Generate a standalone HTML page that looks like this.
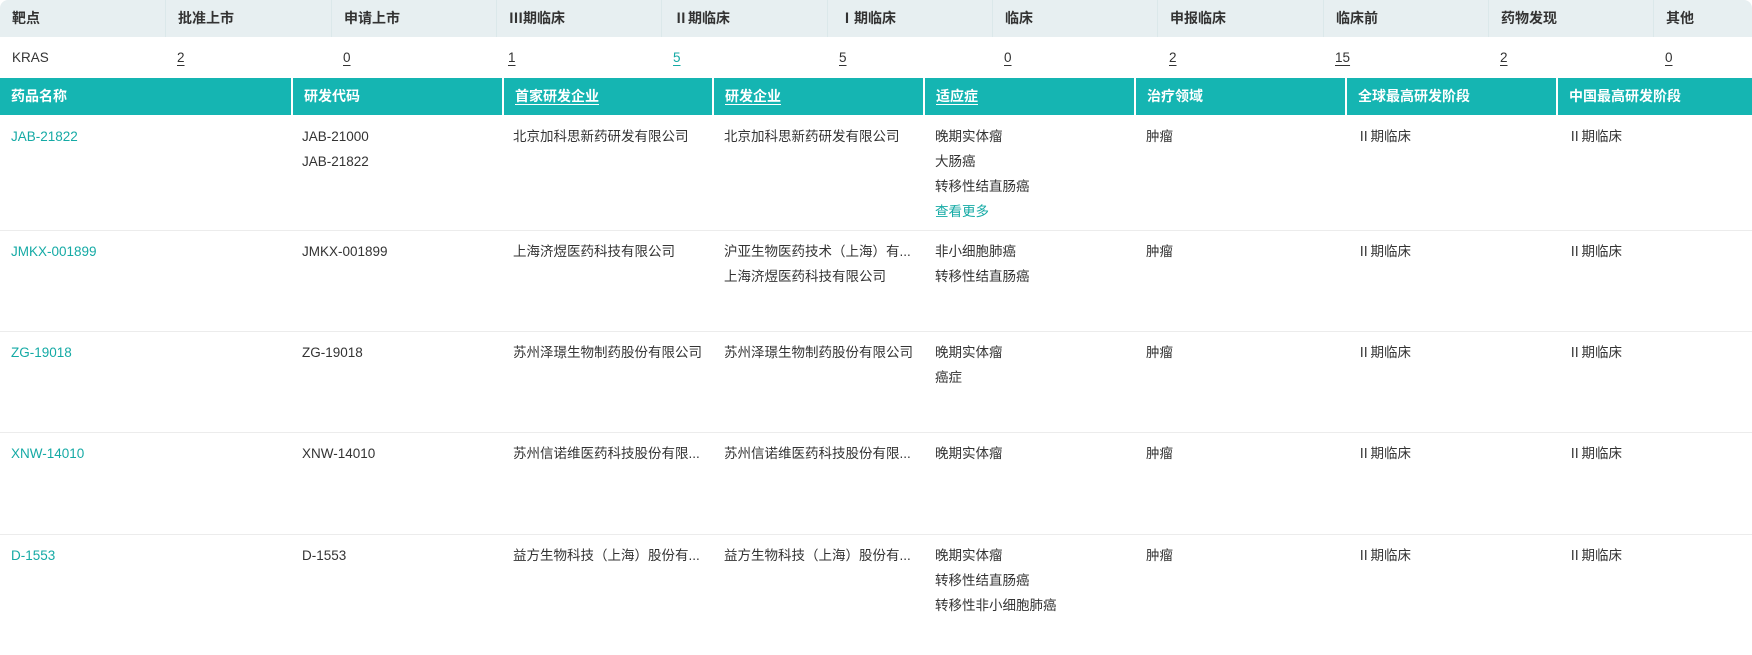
<!DOCTYPE html>
<html><head><meta charset="utf-8"><style>
*{margin:0;padding:0;box-sizing:border-box}
body{width:1752px;height:627px;overflow:hidden;background:#fff;font-family:"Liberation Sans","Noto Sans CJK SC",sans-serif;font-size:13.5px;color:#333}
.a{position:absolute;white-space:nowrap}
.th{position:absolute;top:0;height:37px;line-height:37px;background:#e7eff1;font-weight:bold;color:#333;padding-left:12px;border-left:1px solid #dbe8ea;font-size:14px}
.td{position:absolute;top:37px;height:41px;line-height:41px;padding-left:12px}
.td span{text-decoration:underline;text-underline-offset:3px}
.h{position:absolute;top:78px;height:37px;line-height:37px;background:#15b5b2;color:#fff;font-weight:bold;padding-left:11px;border-left:2px solid #fff;font-size:14px}
.u{text-decoration:underline;text-underline-offset:3px}
.row{position:absolute;left:0;width:1752px;border-bottom:1px solid #ececec}
.c{position:absolute;line-height:25px;white-space:nowrap}
.lk{color:#15aaa5}
</style></head><body>
<div class="th" style="left:0;width:165px;border-left:none;border-top-left-radius:8px">靶点</div>
<div class="th" style="left:165px;width:166px">批准上市</div>
<div class="th" style="left:331px;width:165px">申请上市</div>
<div class="th" style="left:496px;width:165px">Ⅲ期临床</div>
<div class="th" style="left:661px;width:166px">Ⅱ期临床</div>
<div class="th" style="left:827px;width:165px">Ⅰ期临床</div>
<div class="th" style="left:992px;width:165px">临床</div>
<div class="th" style="left:1157px;width:166px">申报临床</div>
<div class="th" style="left:1323px;width:165px">临床前</div>
<div class="th" style="left:1488px;width:165px">药物发现</div>
<div class="th" style="left:1653px;width:99px;border-top-right-radius:8px">其他</div>

<div class="td" style="left:0">KRAS</div>
<div class="td" style="left:165px"><span>2</span></div>
<div class="td" style="left:331px"><span>0</span></div>
<div class="td" style="left:496px"><span>1</span></div>
<div class="td" style="left:661px"><span class="lk">5</span></div>
<div class="td" style="left:827px"><span>5</span></div>
<div class="td" style="left:992px"><span>0</span></div>
<div class="td" style="left:1157px"><span>2</span></div>
<div class="td" style="left:1323px"><span>15</span></div>
<div class="td" style="left:1488px"><span>2</span></div>
<div class="td" style="left:1653px"><span>0</span></div>

<div class="h" style="left:0;width:291px;border-left:none">药品名称</div>
<div class="h" style="left:291px;width:211px">研发代码</div>
<div class="h" style="left:502px;width:210px"><span class="u">首家研发企业</span></div>
<div class="h" style="left:712px;width:211px"><span class="u">研发企业</span></div>
<div class="h" style="left:923px;width:211px"><span class="u">适应症</span></div>
<div class="h" style="left:1134px;width:211px">治疗领域</div>
<div class="h" style="left:1345px;width:211px">全球最高研发阶段</div>
<div class="h" style="left:1556px;width:196px">中国最高研发阶段</div>

<div class="row" style="top:115px;height:116px">
<div class="c lk" style="left:11px;top:9px">JAB-21822</div>
<div class="c" style="left:302px;top:9px">JAB-21000<br>JAB-21822</div>
<div class="c" style="left:513px;top:9px">北京加科思新药研发有限公司</div>
<div class="c" style="left:724px;top:9px">北京加科思新药研发有限公司</div>
<div class="c" style="left:935px;top:9px">晚期实体瘤<br>大肠癌<br>转移性结直肠癌<br><span class="lk">查看更多</span></div>
<div class="c" style="left:1146px;top:9px">肿瘤</div>
<div class="c" style="left:1357px;top:9px">Ⅱ期临床</div>
<div class="c" style="left:1568px;top:9px">Ⅱ期临床</div>
</div>
<div class="row" style="top:231px;height:101px">
<div class="c lk" style="left:11px;top:8px">JMKX-001899</div>
<div class="c" style="left:302px;top:8px">JMKX-001899</div>
<div class="c" style="left:513px;top:8px">上海济煜医药科技有限公司</div>
<div class="c" style="left:724px;top:8px">沪亚生物医药技术（上海）有...<br>上海济煜医药科技有限公司</div>
<div class="c" style="left:935px;top:8px">非小细胞肺癌<br>转移性结直肠癌</div>
<div class="c" style="left:1146px;top:8px">肿瘤</div>
<div class="c" style="left:1357px;top:8px">Ⅱ期临床</div>
<div class="c" style="left:1568px;top:8px">Ⅱ期临床</div>
</div>
<div class="row" style="top:332px;height:101px">
<div class="c lk" style="left:11px;top:8px">ZG-19018</div>
<div class="c" style="left:302px;top:8px">ZG-19018</div>
<div class="c" style="left:513px;top:8px">苏州泽璟生物制药股份有限公司</div>
<div class="c" style="left:724px;top:8px">苏州泽璟生物制药股份有限公司</div>
<div class="c" style="left:935px;top:8px">晚期实体瘤<br>癌症</div>
<div class="c" style="left:1146px;top:8px">肿瘤</div>
<div class="c" style="left:1357px;top:8px">Ⅱ期临床</div>
<div class="c" style="left:1568px;top:8px">Ⅱ期临床</div>
</div>
<div class="row" style="top:433px;height:102px">
<div class="c lk" style="left:11px;top:8px">XNW-14010</div>
<div class="c" style="left:302px;top:8px">XNW-14010</div>
<div class="c" style="left:513px;top:8px">苏州信诺维医药科技股份有限...</div>
<div class="c" style="left:724px;top:8px">苏州信诺维医药科技股份有限...</div>
<div class="c" style="left:935px;top:8px">晚期实体瘤</div>
<div class="c" style="left:1146px;top:8px">肿瘤</div>
<div class="c" style="left:1357px;top:8px">Ⅱ期临床</div>
<div class="c" style="left:1568px;top:8px">Ⅱ期临床</div>
</div>
<div class="row" style="top:535px;height:120px;border-bottom:none">
<div class="c lk" style="left:11px;top:8px">D-1553</div>
<div class="c" style="left:302px;top:8px">D-1553</div>
<div class="c" style="left:513px;top:8px">益方生物科技（上海）股份有...</div>
<div class="c" style="left:724px;top:8px">益方生物科技（上海）股份有...</div>
<div class="c" style="left:935px;top:8px">晚期实体瘤<br>转移性结直肠癌<br>转移性非小细胞肺癌</div>
<div class="c" style="left:1146px;top:8px">肿瘤</div>
<div class="c" style="left:1357px;top:8px">Ⅱ期临床</div>
<div class="c" style="left:1568px;top:8px">Ⅱ期临床</div>
</div>
</body></html>
